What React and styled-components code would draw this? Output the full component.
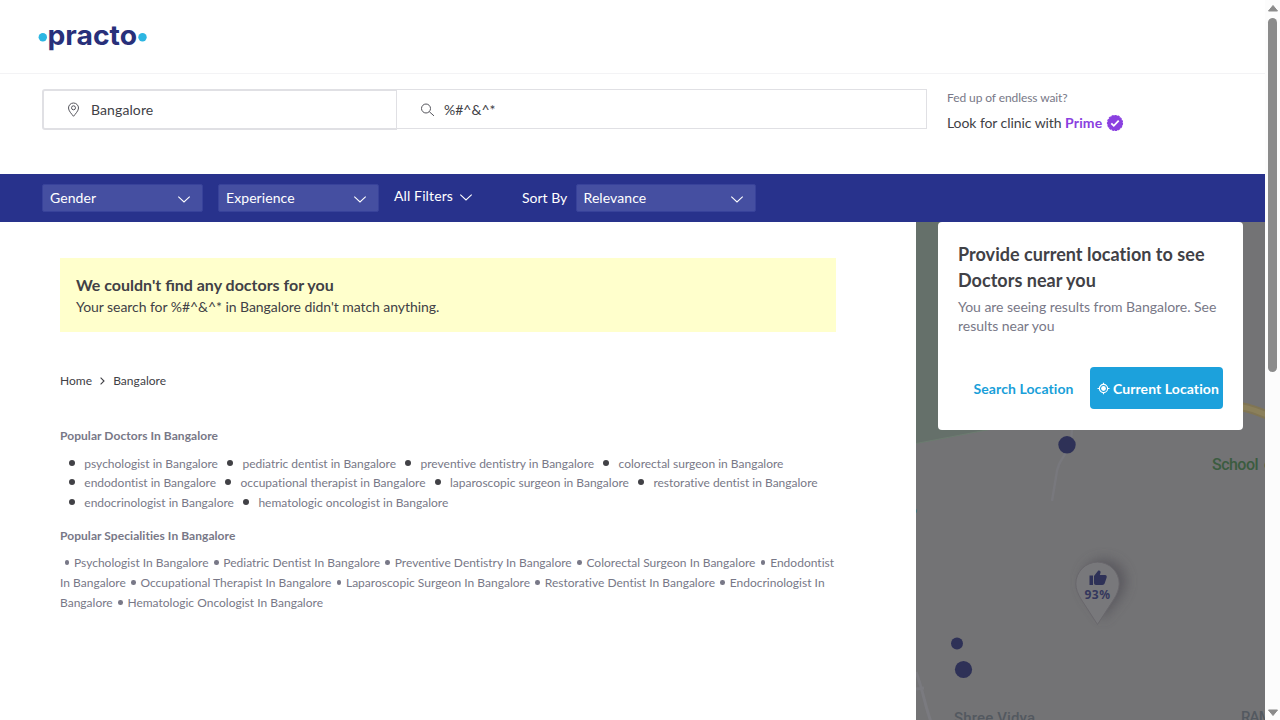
import React from "react";
import styled, { createGlobalStyle } from "styled-components";

const Global = createGlobalStyle`
  * { box-sizing: border-box; }
  html, body { margin: 0; height: 100%; overflow: hidden; background: #fff; }
  body {
    font-family: Lato, "Liberation Sans", sans-serif;
    font-size: 14px;
    color: #414146;
    font-variant-ligatures: no-common-ligatures;
  }
  p, h1, h2, h3, ul { margin: 0; padding: 0; font-weight: 400; }
  button { font: inherit; font-variant-ligatures: inherit; border: 0; background: none; padding: 0; color: inherit; }
  svg { display: block; flex: none; }
`;

const Window = styled.div`
  display: flex;
  width: 1280px;
  height: 720px;
  overflow: hidden;
`;

const Page = styled.div`
  width: 1265px;
  height: 720px;
  display: flex;
  flex-direction: column;
  overflow: hidden;
`;

const Header = styled.header`
  height: 74px;
  flex: none;
  border-bottom: 1px solid #f3f3f5;
  padding: 12px 0 0 38px;
`;

const Wordmark = styled.text`
  font-family: Inter, Lato, sans-serif;
  font-weight: 700;
  font-size: 27.5px;
  fill: #28307a;
`;

const SearchRow = styled.section`
  height: 100px;
  flex: none;
  display: flex;
  align-items: flex-start;
  padding: 15px 0 0 42px;
`;

const LocationField = styled.div`
  width: 355px;
  height: 41px;
  display: flex;
  align-items: center;
  border: 2px solid #e0e0e4;
  border-right-width: 1px;
  border-radius: 3px 0 0 3px;
  padding: 1px 0 0 22px;
  gap: 10px;
`;

const QueryField = styled.div`
  width: 530px;
  height: 40px;
  display: flex;
  align-items: center;
  border: 1px solid #e0e0e4;
  border-left: 0;
  padding: 2px 0 0 23px;
  gap: 9px;
`;

const FieldText = styled.span`
  font-size: 14px;
  line-height: 20px;
  letter-spacing: ${(p) => p.$spacing || "0"};
`;

const PrimePromo = styled.aside`
  padding-left: 20px;
`;

const PromoHint = styled.p`
  font-size: 12px;
  line-height: 18px;
  letter-spacing: -0.09px;
  color: #787887;
`;

const PromoLine = styled.p`
  display: flex;
  align-items: center;
  font-size: 14px;
  line-height: 20px;
  letter-spacing: -0.07px;
  margin-top: 6px;
  white-space: pre;
  b { color: #8a40e0; margin-right: 4px; letter-spacing: 0.15px; }
`;

const FilterBar = styled.nav`
  height: 48px;
  flex: none;
  background: #28328c;
  color: #fff;
  display: flex;
  align-items: flex-start;
  padding: 10px 0 0 42px;
`;

const Select = styled.button`
  width: ${(p) => p.$width}px;
  height: 28px;
  margin-right: ${(p) => p.$gap ?? 16}px;
  display: flex;
  align-items: center;
  justify-content: space-between;
  padding: 0 11px 0 7px;
  border-radius: 2px;
  border: 1px solid #38429a;
  background: #454fa1;
  svg { margin-top: 2px; }
`;

const AllFilters = styled.button`
  height: 24px;
  width: 128px;
  display: flex;
  align-items: center;
  gap: 6px;
  svg { margin-top: 2px; }
`;

const Label = styled.span`
  line-height: 20px;
  letter-spacing: ${(p) => p.$spacing || 0.08}px;
  margin-top: -1px;
`;

const SortLabel = styled.span`
  line-height: 28px;
  width: 53.5px;
`;

const Main = styled.main`
  flex: 1;
  display: flex;
  min-height: 0;
`;

const Results = styled.section`
  width: 916px;
  padding: 36px 80px 0 60px;
`;

const Notice = styled.div`
  height: 74px;
  background: #ffffcc;
  padding: 16px 16px 0;
`;

const NoticeTitle = styled.h1`
  font-size: 16px;
  line-height: 22px;
  font-weight: 700;
  font-variant-ligatures: normal;
`;

const NoticeText = styled.p`
  font-size: 14px;
  line-height: 22px;
  letter-spacing: -0.055px;
`;

const Breadcrumb = styled.div`
  display: flex;
  align-items: center;
  gap: 8px;
  margin-top: 39px;
  font-size: 12px;
  line-height: 20px;
  letter-spacing: 0.04px;
`;

const SectionTitle = styled.h2`
  font-size: 12px;
  line-height: 20px;
  font-weight: 700;
  letter-spacing: 0.06px;
  color: #787887;
  margin-top: ${(p) => p.$top}px;
`;

const DoctorList = styled.ul`
  list-style: none;
  display: flex;
  flex-wrap: wrap;
  margin-top: 7.6px;
  padding-left: 9px;
  font-size: 12px;
  line-height: 19.5px;
  color: #787887;
`;

const DoctorItem = styled.li`
  display: flex;
  align-items: center;
  white-space: nowrap;
  margin-right: 9.2px;
  &::before {
    content: "";
    width: 6px;
    height: 6px;
    border-radius: 50%;
    background: #414146;
    margin: -1px 9.3px 0 0;
  }
`;

const Specialities = styled.p`
  font-size: 12px;
  line-height: 20px;
  letter-spacing: 0.01px;
  color: #787887;
  margin-top: 7px;
`;

const Bullet = styled.span`
  display: inline-block;
  width: 4.6px;
  height: 4.6px;
  border-radius: 50%;
  background: #787887;
  margin: 0 4.7px 2px ${(p) => (p.$first ? 4.7 : 2.3)}px;
`;

const MapPane = styled.section`
  position: relative;
  width: 349px;
  height: 498px;
  overflow: hidden;
  background: #737375;
`;

const LocationCard = styled.div`
  position: absolute;
  left: 22px;
  top: 0;
  width: 305px;
  height: 207.5px;
  background: #fff;
  border-radius: 4px;
  padding: 19px 20px 0;
`;

const CardTitle = styled.h3`
  font-size: 18px;
  line-height: 26px;
  font-weight: 700;
  letter-spacing: 0.03px;
  white-space: nowrap;
`;

const CardText = styled.p`
  font-size: 14px;
  line-height: 19px;
  letter-spacing: -0.03px;
  color: #787887;
  margin-top: 4px;
`;

const CardActions = styled.div`
  display: flex;
  justify-content: flex-end;
  align-items: center;
  margin-top: 32px;
  font-weight: 700;
  letter-spacing: 0.08px;
  white-space: nowrap;
`;

const LinkButton = styled.button`
  color: #199fd9;
  letter-spacing: inherit;
  margin-right: 16.5px;
`;

const PrimaryButton = styled.button`
  width: 133px;
  height: 42px;
  border-radius: 4px;
  background: #1ca1dc;
  color: #fff;
  letter-spacing: inherit;
  display: flex;
  align-items: center;
  padding-left: 7px;
  gap: 3px;
`;

const ScrollTrack = styled.div`
  width: 15px;
  height: 720px;
  background: #fcfcfc;
  display: flex;
  flex-direction: column;
  align-items: center;
  padding: 4.5px 0 4px;
`;

const ScrollThumb = styled.div`
  width: 9px;
  height: 354px;
  border-radius: 5px;
  background: #8b8b8b;
  margin: 6.5px 0 auto;
`;

const Chevron = () => (
  <svg width="14" height="9" viewBox="0 0 14 9" fill="none" stroke="#fff" strokeWidth="1.1">
    <path d="M1.3 1.700 7 7l5.700-5.300" />
  </svg>
);

const Logo = () => (
  <svg width="112" height="52" viewBox="0 -8 112 52">
    <circle cx="4.8" cy="17.2" r="4.2" fill="#2db6e2" />
    <Wordmark x="9.5" y="24.6" textLength="89.5" lengthAdjust="spacingAndGlyphs">practo</Wordmark>
    <circle cx="104.5" cy="17.2" r="4.2" fill="#2db6e2" />
  </svg>
);

const PinIcon = () => (
  <svg width="15" height="16" viewBox="0 0 15 16" fill="none" stroke="#55555c" strokeWidth="1">
    <path d="M7.5 14.3C5.6 11.9 2.5 8.8 2.5 6a5 5 0 0 1 10 0c0 2.800-3.100 5.900-5 8.300Z" />
    <circle cx="7.500" cy="5.800" r="2" />
  </svg>
);

const SearchIcon = () => (
  <svg width="15" height="15" viewBox="0 0 15 15" fill="none" stroke="#55555c" strokeWidth="1">
    <circle cx="6" cy="5.500" r="4.500" />
    <path d="m9.300 8.700 4.700 4.200" />
  </svg>
);

const PrimeBadge = () => (
  <svg width="18" height="18" viewBox="0 0 18 18">
    <circle cx="9" cy="9" r="7.500" fill="#8a40e0" stroke="#8a40e0" strokeWidth="1.200" strokeDasharray="2.400 .74" />
    <path d="m5.300 9.300 2.500 2.500 4.900-5.200" fill="none" stroke="#fff" strokeWidth="1.800" />
  </svg>
);

const TargetIcon = () => (
  <svg width="13" height="13" viewBox="0 0 13 13" fill="none" stroke="#fff" strokeWidth="1.200">
    <circle cx="6.500" cy="6.500" r="4.100" />
    <circle cx="6.500" cy="6.500" r="2.400" fill="#fff" stroke="none" />
    <path d="M6.500.800v1.700M6.500 10.500v1.700M.500 6.500h2M10.500 6.500h2" />
  </svg>
);

const MapArt = () => (
  <svg width="349" height="498" viewBox="0 0 349 498">
    <defs>
      <filter id="pinShade" x="-60%" y="-60%" width="220%" height="220%">
        <feGaussianBlur stdDeviation="6" />
      </filter>
    </defs>
    <path d="M0 0h36v207h40L0 221.500Z" fill="#65706a" />
    <path d="M0 221.500 76 207" stroke="#6c7c70" fill="none" />
    <path d="M320 184c13 1 20 5 34 10" fill="none" stroke="#807554" strokeWidth="9" />
    <path d="M320 184c13 1 20 5 34 10" fill="none" stroke="#8b805b" strokeWidth="5" />
    <path d="M156 207c-1 28-14 26-16 48l-4 24" fill="none" stroke="#78787d" strokeWidth="2.500" />
    <path d="M0 450c7 18 9 34 15 50M0 467l8-1" fill="none" stroke="#7a7a7f" strokeWidth="3" />
    <circle cx="-2.200" cy="289" r="3" fill="#31747b" />
    <g fill="#2e3157">
      <circle cx="151" cy="222.800" r="8.700" />
      <circle cx="41" cy="421.500" r="6" />
      <circle cx="47.500" cy="447.500" r="8.600" />
    </g>
    <path d="M187 398c-5-12-21-23-21-39a22 22 0 0 1 44 0c0 16-16 27-23 39Z" fill="#4c4851" opacity=".6" filter="url(#pinShade)" />
    <path d="M181.500 402.500 165 377c-3-5-5.200-10-5.200-15.200a21.700 21.700 0 0 1 43.400 0c0 5.200-2.200 10.200-5.200 15.200Z" fill="#78787b" stroke="#69676c" />
    <path d="M173.500 353.500h3.500v9.500h-3.500ZM178 354l4.300-5.500c1.700-.5 2.600.8 2.200 2.300l-.7 2.300h5c2.100 0 2.200 1.700 1.700 3l-1.800 5.200c-.4 1.300-1.200 1.700-2.400 1.700H180c-1.200 0-2-.8-2-2Z" fill="#2e3157" />
    <text x="168.500" y="376.500" textLength="25.500" fill="#34375d" fontFamily="Noto Sans, sans-serif" fontWeight="700" fontSize="12">93%</text>
    <g fontFamily="Roboto, sans-serif" fontWeight="500">
      <text x="296" y="247.500" fontSize="16" textLength="46.500" fill="#3b5c40">School</text>
      <text x="348" y="247.500" fontSize="16" fill="#3b5c40">o</text>
      <text x="38" y="501" fontSize="15" textLength="81" fill="#535960">Shree Vidya</text>
      <text x="325" y="500" fontSize="15" textLength="40" fill="#535960">RAMA</text>
    </g>
  </svg>
);

const doctors = [
  "psychologist", "pediatric dentist", "preventive dentistry", "colorectal surgeon",
  "endodontist", "occupational therapist", "laparoscopic surgeon", "restorative dentist",
  "endocrinologist", "hematologic oncologist",
];
const titleCase = (s) => s.replace(/\b\w/g, (c) => c.toUpperCase());

export default function App() {
  return (
    <Window>
      <Global />
      <Page>
        <Header><Logo /></Header>
        <SearchRow>
          <LocationField><PinIcon /><FieldText $spacing="0.1px">Bangalore</FieldText></LocationField>
          <QueryField><SearchIcon /><FieldText>%#^&amp;^*</FieldText></QueryField>
          <PrimePromo>
            <PromoHint>Fed up of endless wait?</PromoHint>
            <PromoLine>{"Look for clinic with "}<b>Prime</b><PrimeBadge /></PromoLine>
          </PrimePromo>
        </SearchRow>
        <FilterBar>
          <Select $width={161} $gap={15}><Label>Gender</Label><Chevron /></Select>
          <Select $width={161} $gap={15}><Label>Experience</Label><Chevron /></Select>
          <AllFilters><Label $spacing={0.12}>All Filters</Label><Chevron /></AllFilters>
          <SortLabel>Sort By</SortLabel>
          <Select $width={180.5}><Label>Relevance</Label><Chevron /></Select>
        </FilterBar>
        <Main>
          <Results>
            <Notice>
              <NoticeTitle>We couldn't find any doctors for you</NoticeTitle>
              <NoticeText>Your search for %#^&amp;^* in Bangalore didn't match anything.</NoticeText>
            </Notice>
            <Breadcrumb>
              <span>Home</span>
              <svg width="5" height="8" viewBox="0 0 5 8" fill="none" stroke="#414146" strokeWidth="1.100">
                <path d="m.6.6 3.400 3.400L.6 7.400" />
              </svg>
              <span>Bangalore</span>
            </Breadcrumb>
            <SectionTitle $top={35}>Popular Doctors In Bangalore</SectionTitle>
            <DoctorList>
              {doctors.map((d) => <DoctorItem key={d}>{d} in Bangalore</DoctorItem>)}
            </DoctorList>
            <SectionTitle $top={13.6}>Popular Specialities In Bangalore</SectionTitle>
            <Specialities>
              {doctors.map((d, i) => (
                <React.Fragment key={d}>
                  <Bullet $first={i === 0} />{titleCase(d)} In Bangalore{" "}
                </React.Fragment>
              ))}
            </Specialities>
          </Results>
          <MapPane>
            <MapArt />
            <LocationCard>
              <CardTitle>Provide current location to see<br />Doctors near you</CardTitle>
              <CardText>You are seeing results from Bangalore. See results near you</CardText>
              <CardActions>
                <LinkButton>Search Location</LinkButton>
                <PrimaryButton><TargetIcon />Current Location</PrimaryButton>
              </CardActions>
            </LocationCard>
          </MapPane>
        </Main>
      </Page>
      <ScrollTrack>
        <svg width="10" height="7" viewBox="0 0 10 7"><path d="M5 .500 9.500 6H.500Z" fill="#8b8b8b" stroke="#8b8b8b" strokeLinejoin="round" /></svg>
        <ScrollThumb />
        <svg width="10" height="7" viewBox="0 0 10 7"><path d="M5 6.500.500 1h9Z" fill="#8b8b8b" stroke="#8b8b8b" strokeLinejoin="round" /></svg>
      </ScrollTrack>
    </Window>
  );
}
